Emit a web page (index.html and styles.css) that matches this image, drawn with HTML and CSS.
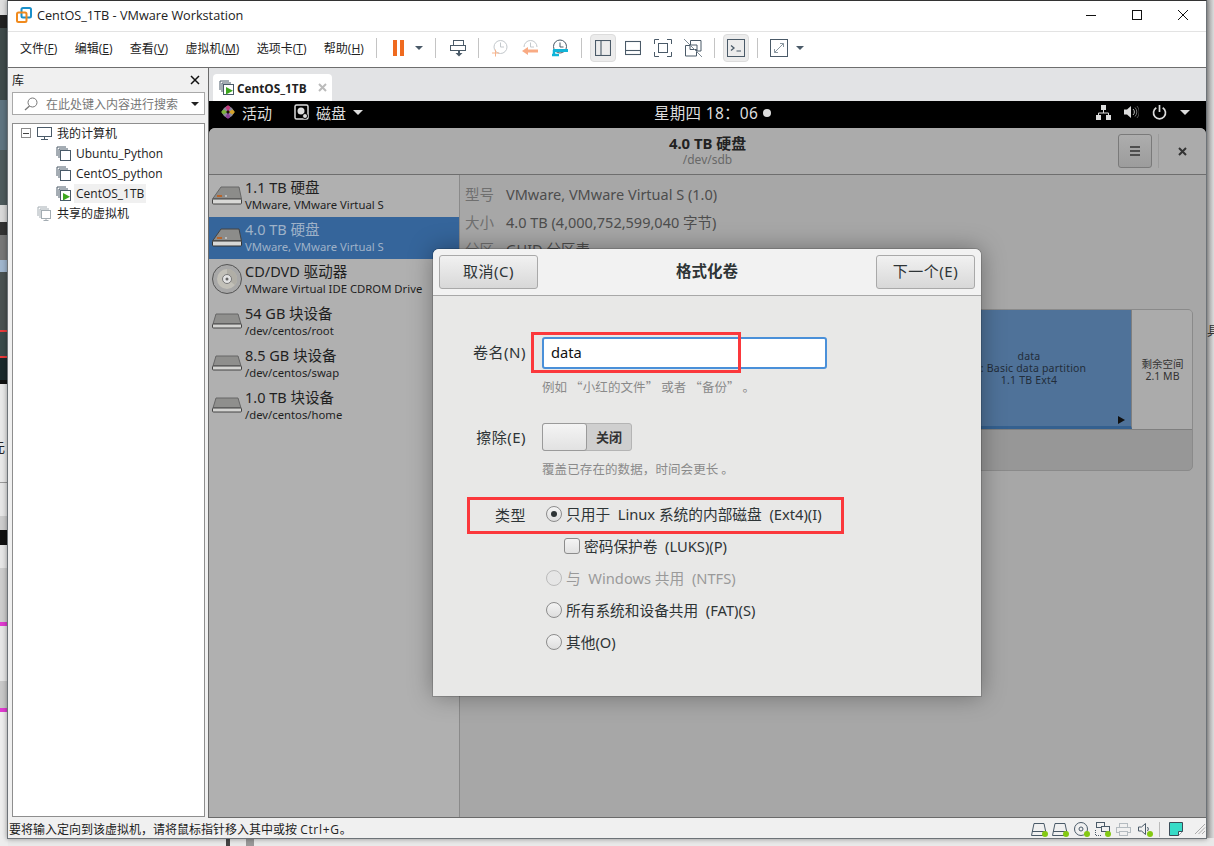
FILE: index.html
```html
<!DOCTYPE html>
<html lang="zh-CN">
<head>
<meta charset="utf-8">
<title>CentOS_1TB - VMware Workstation</title>
<link rel="stylesheet" href="styles.css">
</head>
<body>
<div class="desktop">
  <div class="bg bg-left"></div>
  <div class="bg bg-glyph">元</div>
  <div class="bg bg-glyph2">具</div>
  <div class="bg bg-bot1"></div>
  <div class="bg bg-bot2"></div>

  <div class="window">
    <header class="titlebar">
      <svg class="app-logo" viewBox="0 0 16 16" width="16" height="16">
        <rect x="5.5" y="1" width="9.5" height="9.5" rx="1.5" fill="none" stroke="#1a8fc9" stroke-width="2"/>
        <rect x="1" y="5.5" width="9.5" height="9.5" rx="1.5" fill="none" stroke="#f08a1d" stroke-width="2"/>
      </svg>
      <span class="title-text">CentOS_1TB - VMware Workstation</span>
      <div class="win-btns">
        <svg width="12" height="12" viewBox="0 0 12 12"><path d="M1 6.5h10" stroke="#111" fill="none"/></svg>
        <svg width="12" height="12" viewBox="0 0 12 12"><rect x="1.5" y="1.5" width="9" height="9" stroke="#111" fill="none"/></svg>
        <svg width="12" height="12" viewBox="0 0 12 12"><path d="M1 1l10 10M11 1L1 11" stroke="#111" fill="none"/></svg>
      </div>
    </header>

    <nav class="menubar">
      <span class="menu">文件(<u>F</u>)</span>
      <span class="menu">编辑(<u>E</u>)</span>
      <span class="menu">查看(<u>V</u>)</span>
      <span class="menu">虚拟机(<u>M</u>)</span>
      <span class="menu">选项卡(<u>T</u>)</span>
      <span class="menu">帮助(<u>H</u>)</span>
      <i class="sep sep-first"></i>
      <span class="tool pause"><b></b><b></b></span>
      <span class="caret-btn"><i class="caret"></i></span>
      <i class="sep"></i>
      <span class="tool print"><svg width="18" height="18" viewBox="0 0 18 18" fill="none" stroke="#4a5a68"><rect x="4.5" y="1.5" width="10" height="5"/><rect x="1.5" y="6.5" width="15" height="5"/><path d="M10 11.5v3" stroke-width="2"/><path d="M6.500 14h7L10 17.500z" fill="#4a5a68" stroke="none"/></svg></span>
      <i class="sep"></i>
      <span class="tool"><svg width="18" height="18" viewBox="0 0 18 18" fill="none"><circle cx="9.500" cy="8" r="6.500" stroke="#c3c8cc"/><path d="M9.500 3.500V8h3.500" stroke="#c3c8cc"/><path d="M1 14h7M4.500 10.500v7" stroke="#f7b48c"/></svg></span>
      <span class="tool"><svg width="18" height="18" viewBox="0 0 18 18" fill="none"><path d="M3 8a6.500 6.500 0 0 1 13 0" stroke="#c3c8cc"/><path d="M9.500 3.500V8H13" stroke="#c3c8cc"/><path d="M17 12H6" stroke="#f9ab84" stroke-width="3"/><path d="M7 8v8l-6-4z" fill="#f9ab84"/></svg></span>
      <span class="tool"><svg width="18" height="18" viewBox="0 0 18 18" fill="none"><circle cx="9" cy="7.500" r="6.500" stroke="#4a5a68"/><path d="M9 3.500V8h3.500" stroke="#4a5a68"/><path d="M2 11.500h15" stroke="#10b4d8" stroke-width="3"/><path d="M1 16h7" stroke="#10b4d8" stroke-width="2.500"/><path d="M3 11v5" stroke="#10b4d8" stroke-width="2.500"/></svg></span>
      <i class="sep"></i>
      <span class="tool active"><svg width="16" height="16" viewBox="0 0 16 16" fill="none" stroke="#4a5a68" stroke-width="1.100"><rect x=".5" y=".5" width="15" height="15"/><path d="M6 .5v15"/></svg></span>
      <span class="tool"><svg width="16" height="16" viewBox="0 0 16 16" fill="none" stroke="#4a5a68" stroke-width="1.100"><rect x=".5" y="1.500" width="15" height="13"/><path d="M.5 10.500h15"/></svg></span>
      <span class="tool"><svg width="18" height="18" viewBox="0 0 18 18" fill="none" stroke="#4a5a68"><path d="M.5 5V.5H5M13 .5h4.500V5M17.500 13v4.500H13M5 17.500H.5V13"/><rect x="4.500" y="4.500" width="9" height="9"/></svg></span>
      <span class="tool"><svg width="18" height="18" viewBox="0 0 18 18" fill="none" stroke="#4a5a68"><path d="M6.500 1.500h10.500v10.500h-4V6H6.500z"/><path d="M1.500 6.500h4.500v4h6.500v6.500H1.500z"/><path d="M0 0l18 18" stroke="#7e8b95"/></svg></span>
      <i class="sep"></i>
      <span class="tool active"><svg width="18" height="18" viewBox="0 0 18 18" fill="none" stroke="#4a5a68"><rect x=".5" y=".5" width="17" height="17"/><path d="M4 6.500l3 2.500-3 2.500" stroke-width="1.300"/><path d="M9.500 12h4.500"/></svg></span>
      <i class="sep"></i>
      <span class="tool"><svg width="18" height="18" viewBox="0 0 18 18" fill="none" stroke="#4a5a68"><rect x=".5" y=".5" width="17" height="17"/><path d="M4.500 13.500l9-9M10 4.500h3.500V8M4.500 10v3.500H8" stroke="#8a97a0"/></svg></span>
      <span class="caret-btn end"><i class="caret"></i></span>
    </nav>

    <main class="workspace">
      <aside class="library">
        <div class="lib-head"><span>库</span><svg width="10" height="10" viewBox="0 0 10 10"><path d="M1 1l8 8M9 1L1 9" stroke="#111" stroke-width="1.500" fill="none"/></svg></div>
        <div class="lib-search">
          <svg width="14" height="14" viewBox="0 0 14 14" fill="none" stroke="#777"><circle cx="8.500" cy="5.500" r="4.500"/><path d="M5.500 9L1 13" stroke-width="1.300"/></svg>
          <span>在此处键入内容进行搜索</span>
          <i class="caret dark"></i>
        </div>
        <div class="tree">
          <div class="tree-row top">
            <span class="minus"></span>
            <svg width="15" height="13" viewBox="0 0 15 13" fill="none" stroke="#4a5a68"><rect x=".5" y=".5" width="14" height="9"/><path d="M7.500 10v2M4 12.500h7"/></svg>
            <span class="tree-label">我的计算机</span>
          </div>
          <div class="tree-row child"><svg class="vm-i" width="15" height="15" viewBox="0 0 15 15" fill="none" stroke="#4a5a68"><path d="M1 10V1h9"/><path d="M3 12V3h9"/><rect x="4.500" y="4.500" width="10" height="10" fill="#fff"/></svg><span>Ubuntu_Python</span></div>
          <div class="tree-row child"><svg class="vm-i" width="15" height="15" viewBox="0 0 15 15" fill="none" stroke="#4a5a68"><path d="M1 10V1h9"/><path d="M3 12V3h9"/><rect x="4.500" y="4.500" width="10" height="10" fill="#fff"/></svg><span>CentOS_python</span></div>
          <div class="tree-row child"><svg class="vm-i" width="15" height="15" viewBox="0 0 15 15" fill="none" stroke="#4a5a68"><path d="M1 10V1h9"/><path d="M3 12V3h9"/><rect x="4.500" y="4.500" width="10" height="10" fill="#fff"/><path d="M7 7v7.500l7-3.700z" fill="#3da61e" stroke="none"/></svg><span class="sel">CentOS_1TB</span></div>
          <div class="tree-row top shared">
            <svg width="15" height="15" viewBox="0 0 15 15" fill="none" stroke="#a4adb3"><path d="M1 10V1h9"/><path d="M3 12V3h9"/><rect x="4.500" y="4.500" width="9" height="8" fill="#fff"/><path d="M9 12.500v2M6.500 14.500h5"/></svg>
            <span class="tree-label">共享的虚拟机</span>
          </div>
        </div>
      </aside>

      <section class="vm-pane">
        <div class="tabstrip">
          <div class="tab">
            <svg width="15" height="15" viewBox="0 0 15 15" fill="none" stroke="#4a5a68"><path d="M1 10V1h9"/><path d="M3 12V3h9"/><rect x="4.500" y="4.500" width="10" height="10" fill="#fff"/><path d="M7 7v7.500l7-3.700z" fill="#3da61e" stroke="none"/></svg>
            <span class="tab-label">CentOS_1TB</span>
            <svg class="tab-x" width="9" height="9" viewBox="0 0 9 9"><path d="M1 1l7 7M8 1L1 8" stroke="#bbb" stroke-width="2" fill="none"/></svg>
          </div>
        </div>

        <div class="guest">
          <div class="gnome-top">
            <div class="gt-left">
              <svg width="14" height="14" viewBox="0 0 14 14"><path d="M3 3L6 1v5H1zM11 3L8 1v5h5zM11 11l-3 2V8h5zM3 11l3 2V8H1z" fill="#8b8a9c"/><path d="M7 0l2.500 2.500L7 6.500 4.500 2.500z" fill="#c13a7c"/><path d="M14 7l-2.500 2.500L7.500 7l4-2.500z" fill="#d3a229"/><path d="M7 14l-2.500-2.500L7 7.500l2.500 4z" fill="#8a3f97"/><path d="M0 7l2.500-2.500 4 2.500-4 2.500z" fill="#7db23c"/></svg>
              <span class="gt-act">活动</span>
              <svg class="gt-app" width="15" height="16" viewBox="0 0 15 16" fill="none"><rect x="1" y="1" width="13" height="14" rx="1.500" stroke="#ddd" stroke-width="1.500"/><circle cx="7" cy="7" r="3.500" fill="#ddd"/><circle cx="11" cy="12" r="2.500" fill="#ddd" stroke="#000"/></svg>
              <span>磁盘</span>
              <i class="caret light"></i>
            </div>
            <div class="gt-clock">星期四 18：06<i class="dot"></i></div>
            <div class="gt-tray">
              <svg width="15" height="15" viewBox="0 0 15 15" fill="#ddd"><rect x="5" y="0" width="5" height="5"/><rect x="0" y="10" width="5" height="5"/><rect x="10" y="10" width="5" height="5"/><path d="M7.500 5v3M2.500 10V8h10v2" stroke="#ddd" fill="none"/></svg>
              <svg width="15" height="14" viewBox="0 0 15 14" fill="none"><path d="M0 4.500h3L7 1v12L3 9.500H0z" fill="#ddd"/><path d="M9 4a4 4 0 0 1 0 6" stroke="#bbb"/><path d="M11 2.500a6.500 6.500 0 0 1 0 9" stroke="#777"/><path d="M13 1a9 9 0 0 1 0 12" stroke="#555"/></svg>
              <svg width="15" height="15" viewBox="0 0 15 15" fill="none" stroke="#ddd" stroke-width="1.700"><path d="M4.300 2.800a6 6 0 1 0 6.400 0"/><path d="M7.500 0v7"/></svg>
              <i class="caret light"></i>
            </div>
          </div>

          <div class="disks">
            <div class="disks-head">
              <div class="dh-spacer"></div>
              <div class="dh-title">
                <strong>4.0 TB 硬盘</strong>
                <small>/dev/sdb</small>
              </div>
              <div class="dh-actions">
                <span class="menu-btn"><svg width="10" height="10" viewBox="0 0 10 10"><path d="M0 1h10M0 5h10M0 9h10" stroke="#333" stroke-width="1.600"/></svg></span>
                <i class="dh-sep"></i>
                <svg class="dh-close" width="9" height="9" viewBox="0 0 9 9"><path d="M1 1l7 7M8 1L1 8" stroke="#333" stroke-width="2" fill="none"/></svg>
              </div>
            </div>
            <div class="disks-body">
              <ul class="drive-list">
                <li class="drive"><svg class="hdd" width="30" height="19" viewBox="0 0 30 19"><path d="M9 1h18l2.500 12H.5z" fill="#8c8c8a" stroke="#666"/><rect x=".5" y="13" width="29" height="5" rx="1" fill="#d8d8d6" stroke="#444"/><rect x="5" y="9" width="5" height="2" fill="#b8642a"/><rect x="13" y="9" width="2" height="2" fill="#bbb"/></svg><div><b>1.1 TB 硬盘</b><small>VMware, VMware Virtual S</small></div></li>
                <li class="drive selected"><svg class="hdd" width="30" height="19" viewBox="0 0 30 19"><path d="M9 1h18l2.500 12H.5z" fill="#8c8c8a" stroke="#444"/><rect x=".5" y="13" width="29" height="5" rx="1" fill="#d8d8d6" stroke="#333"/><rect x="5" y="9" width="5" height="2" fill="#b8642a"/><rect x="13" y="9" width="2" height="2" fill="#bbb"/></svg><div><b>4.0 TB 硬盘</b><small>VMware, VMware Virtual S</small></div></li>
                <li class="drive"><svg class="hdd" width="30" height="30" viewBox="0 0 30 30"><circle cx="15" cy="15" r="14.500" fill="#a8a8a8" stroke="#555"/><circle cx="15" cy="15" r="10" fill="#c2c0b8"/><path d="M15 5a10 10 0 0 1 8 16L15 15z" fill="#b0aea6"/><circle cx="15" cy="15" r="4.500" fill="#e4e4e4" stroke="#777"/><circle cx="15" cy="15" r="1.500" fill="#666"/></svg><div><b>CD/DVD 驱动器</b><small>VMware Virtual IDE CDROM Drive</small></div></li>
                <li class="drive"><svg class="hdd" width="30" height="16" viewBox="0 0 30 16"><path d="M4 1h22l3 10H1z" fill="#8f8f8d" stroke="#666"/><rect x=".5" y="11" width="29" height="4" rx="1" fill="#d4d4d2" stroke="#444"/></svg><div><b>54 GB 块设备</b><small>/dev/centos/root</small></div></li>
                <li class="drive"><svg class="hdd" width="30" height="16" viewBox="0 0 30 16"><path d="M4 1h22l3 10H1z" fill="#8f8f8d" stroke="#666"/><rect x=".5" y="11" width="29" height="4" rx="1" fill="#d4d4d2" stroke="#444"/></svg><div><b>8.5 GB 块设备</b><small>/dev/centos/swap</small></div></li>
                <li class="drive"><svg class="hdd" width="30" height="16" viewBox="0 0 30 16"><path d="M4 1h22l3 10H1z" fill="#8f8f8d" stroke="#666"/><rect x=".5" y="11" width="29" height="4" rx="1" fill="#d4d4d2" stroke="#444"/></svg><div><b>1.0 TB 块设备</b><small>/dev/centos/home</small></div></li>
              </ul>
              <div class="detail">
                <div class="info"><span class="k">型号</span><span>VMware, VMware Virtual S (1.0)</span></div>
                <div class="info"><span class="k">大小</span><span>4.0 TB (4,000,752,599,040 字节)</span></div>
                <div class="info"><span class="k">分区</span><span>GUID 分区表</span></div>
                <div class="map">
                  <div class="map-row">
                    <div class="part-data">
                      <span>data</span>
                      <span>2 : Basic data partition</span>
                      <span>1.1 TB Ext4</span>
                      <i class="part-arrow"></i>
                    </div>
                    <div class="part-free"><span>剩余空间</span><span>2.1 MB</span></div>
                  </div>
                  <div class="map-foot"></div>
                </div>
              </div>
            </div>
          </div>

          <div class="dialog">
            <div class="dlg-head">
              <button class="btn" type="button">取消(C)</button>
              <strong>格式化卷</strong>
              <button class="btn" type="button">下一个(E)</button>
            </div>
            <div class="dlg-body">
              <div class="field name-field">
                <label>卷名(N)</label>
                <div class="ctl">
                  <div class="input">data</div>
                  <p class="hint">例如 “小红的文件” 或者 “备份” 。</p>
                </div>
              </div>
              <div class="field erase-field">
                <label>擦除(E)</label>
                <div class="ctl">
                  <div class="switch"><span class="knob"></span><span class="off">关闭</span></div>
                  <p class="hint">覆盖已存在的数据，时间会更长 。</p>
                </div>
              </div>
              <div class="field type-field">
                <label>类型</label>
                <div class="options">
                  <div class="opt"><i class="radio on"></i>只用于 &nbsp;Linux 系统的内部磁盘 &nbsp;(Ext4)(I)</div>
                  <div class="opt sub"><i class="check"></i>密码保护卷 &nbsp;(LUKS)(P)</div>
                  <div class="opt disabled"><i class="radio"></i>与 &nbsp;Windows 共用 &nbsp;(NTFS)</div>
                  <div class="opt"><i class="radio"></i>所有系统和设备共用 &nbsp;(FAT)(S)</div>
                  <div class="opt"><i class="radio"></i>其他(O)</div>
                </div>
              </div>
            </div>
          </div>
        </div>
      </section>
    </main>

    <footer class="statusbar">
      <span>要将输入定向到该虚拟机，请将鼠标指针移入其中或按 <span class="key">Ctrl+G</span>。</span>
      <div class="status-icons">
        <span class="si"><svg width="16" height="13" viewBox="0 0 16 13" fill="none" stroke="#4a5a68"><path d="M3 .5h10l2.500 12H.5z"/><path d="M1 8.500h14"/></svg><i></i></span>
        <span class="si"><svg width="16" height="13" viewBox="0 0 16 13" fill="none" stroke="#4a5a68"><path d="M3 .5h10l2.500 12H.5z"/><path d="M1 8.500h14"/></svg><i></i></span>
        <span class="si"><svg width="14" height="14" viewBox="0 0 14 14" fill="none" stroke="#4a5a68"><circle cx="7" cy="7" r="6.500"/><circle cx="7" cy="7" r="2"/></svg><i></i></span>
        <span class="si"><svg width="15" height="14" viewBox="0 0 15 14" fill="none" stroke="#4a5a68"><rect x="1.500" y=".5" width="8" height="5"/><rect x="6.500" y="4.500" width="8" height="5" fill="#f0f0f0"/><path d="M.5 8v5.500H7" stroke-dasharray="1 1"/></svg><i></i></span>
        <span class="si"><svg width="15" height="13" viewBox="0 0 15 13" fill="none" stroke="#b4bbc0"><rect x="3.500" y=".5" width="8" height="4"/><rect x=".5" y="4.500" width="14" height="5"/><rect x="3.500" y="8.500" width="8" height="4" fill="#f0f0f0"/></svg></span>
        <span class="si"><svg width="12" height="14" viewBox="0 0 12 14" fill="none" stroke="#4a5a68"><path d="M.5 5h3l4-3.500v11L3.500 9h-3z"/><path d="M9.500 5a3 3 0 0 1 0 4"/></svg><i></i></span>
        <i class="st-sep"></i>
        <svg class="note" width="14" height="14" viewBox="0 0 14 14"><path d="M.5.5h13v9l-4 4h-9z" fill="#37dbc7" stroke="#3c4b57"/><path d="M13.500 9.500h-4v4" fill="#fff" stroke="#3c4b57"/></svg>
        <svg class="grip" width="12" height="12" viewBox="0 0 12 12"><path d="M11 1L1 11M11 4.500L4.500 11M11 8l-3 3" stroke="#aaa" fill="none"/></svg>
      </div>
    </footer>
  </div>

  <div class="mark mark-name"></div>
  <div class="mark mark-type"></div>
</div>
</body>
</html>
```

FILE: styles.css
```css
* { box-sizing: border-box; }
html, body { margin: 0; padding: 0; }
body { width: 1214px; height: 846px; overflow: hidden; font-family: "Open Sans", "Noto Sans CJK SC", sans-serif; font-size: 12px; color: #1a1a1a; }
ul { list-style: none; margin: 0; padding: 0; }
p { margin: 0; }
i { font-style: normal; display: block; }

.desktop { position: relative; width: 1214px; height: 846px; background: linear-gradient(90deg, #9d9d9d 1206px, #dcdcdc 1214px); overflow: hidden; }
.bg { position: absolute; }
.bg-left { left: 0; top: 0; width: 8px; height: 846px; background: linear-gradient(180deg,
  #dedede 0 15px, #222 15px 28px, #3f4a4a 28px 100px, #5f7480 100px 150px, #4d5a5c 150px 205px,
  #d8d8d8 205px 222px, #333 222px 235px, #777 235px 260px, #9fb5cd 260px 272px, #4a5252 272px 330px,
  #ea3a3a 330px 332px, #3a4a4a 332px 356px, #ea3a3a 356px 358px, #1a2a2c 358px 380px, #111 380px 384px,
  #e8e8e8 384px 482px, #999 482px 483px, #e6e6e6 483px 516px, #ccc 516px 530px, #111 530px 545px,
  #e6e6e6 545px 568px, #cdcdcd 568px 622px, #e03bd0 622px 626px, #e6e6e6 626px 681px, #c8c8c8 681px 708px,
  #e03bd0 708px 712px, #ededed 712px); }
.bg-glyph { left: -8px; top: 437px; font-size: 13px; color: #222; }
.bg-glyph2 { left: 1207px; top: 320px; font-size: 13px; color: #333; }
.bg-bot1 { left: 8px; top: 838px; width: 1206px; height: 8px; background: #e9e9e9; }
.bg-bot2 { left: 226px; top: 838px; width: 28px; height: 8px; background: linear-gradient(90deg, #444 0 4px, #e8e8e8 4px 20px, #999 20px); }

.window { position: absolute; left: 7px; top: 0; width: 1200px; height: 839px; background: #f0f0f0; border: 1px solid #6d7378; border-top: 1px solid #333; display: flex; flex-direction: column; box-shadow: 0 0 5px rgba(0,0,0,.4); }

.titlebar { height: 30px; flex: none; background: #fff; display: flex; align-items: center; padding: 0 0 2px 8px; }
.app-logo { margin-right: 5px; }
.title-text { font-size: 12.700px; color: #222; }
.win-btns { margin-left: auto; display: flex; gap: 34px; padding-right: 17px; }

.menubar { height: 37px; flex: none; background: #fff; border-top: 1px solid #e3e3e3; border-bottom: 1px solid #6e6e6e; display: flex; align-items: center; padding: 0 0 4px 12px; }
.menu { font-size: 12px; margin-right: 17.400px; color: #222; white-space: nowrap; }
.menu u { text-underline-offset: 1px; }
.sep { width: 1px; height: 20px; background: #c4c4c4; flex: none; }
.sep-first { margin-left: -5px; margin-right: 4px; }
.tool { width: 30px; height: 28px; display: flex; align-items: center; justify-content: center; flex: none; }
.menubar .sep + .tool { margin-left: 6px; }
.menubar .tool + .sep { margin-left: 6px; }
.menubar .sep + .tool.print { margin: 0 -1px 0 7px; }
.tool.active { width: 26px; background: #ececec; border: 1px solid #dcdcdc; border-radius: 4px; }
.menubar .sep + .tool.active { margin-left: 8px; }
.menubar .tool.active + .sep { margin-left: 8px; }
.tool.active + .tool { margin-left: 2px; }
.pause { gap: 3px; width: 22px; }
.pause b { display: block; width: 4px; height: 16px; background: #ef6a1f; }
.caret-btn { width: 14px; display: flex; justify-content: center; margin: 0 9px 0 3px; flex: none; }
.caret-btn.end { margin: 0 0 0 -1px; }
.caret { width: 0; height: 0; border-left: 4px solid transparent; border-right: 4px solid transparent; border-top: 4px solid #4a5a68; }
.caret.dark { border-top-color: #222; margin-left: auto; }
.caret.light { border-left-width: 5px; border-right-width: 5px; border-top: 5px solid #ddd; }

.workspace { flex: 1; display: flex; min-height: 0; background: #f0f0f0; }
.library { width: 200px; flex: none; padding: 0 3px 4px 4px; display: flex; flex-direction: column; }
.lib-head { height: 24px; flex: none; display: flex; align-items: center; justify-content: space-between; padding-right: 5px; font-size: 12px; }
.lib-search { height: 23px; flex: none; background: #fff; border: 1px solid #a9a9a9; display: flex; align-items: center; padding: 0 5px 0 11px; color: #777; gap: 8px; }
.tree { flex: 1; margin-top: 8px; background: #fff; border: 1px solid #8e8e8e; }
.tree-row { height: 20px; display: flex; align-items: center; font-size: 12px; color: #222; white-space: nowrap; padding-bottom: 2px; }
.tree-row.top { padding-left: 8px; gap: 6px; }
.tree-row.child { padding-left: 43px; gap: 5px; }
.tree-row.shared { padding-left: 24px; }
.tree-label { margin-left: -1px; }
.minus { width: 10px; height: 10px; border: 1px solid #8a8a8a; position: relative; }
.minus::after { content: ""; position: absolute; left: 1px; right: 1px; top: 3.500px; height: 1px; background: #444; }
.sel { background: #f0f0f0; padding: 1px 2px; margin-left: -2px; }

.vm-pane { flex: 1; min-width: 0; display: flex; flex-direction: column; border-left: 1px solid #6a6a6a; border-bottom: 1px solid #6a6a6a; margin-bottom: 3px; position: relative; }
.tabstrip { height: 33px; flex: none; background: #e2e3e5; padding: 6px 0 0 4px; display: flex; }
.tab { width: 119px; height: 27px; background: #fff; border-radius: 4px 4px 0 0; display: flex; align-items: center; padding-left: 6px; gap: 3px; }
.tab-label { font-weight: 700; font-size: 11.800px; color: #222; }
.tab-x { margin-left: 8px; }

.guest { flex: 1; min-height: 0; display: flex; flex-direction: column; background: #000; position: relative; }
.gnome-top { height: 27px; flex: none; background: #000; color: #ddd; position: relative; display: flex; align-items: center; font-family: "Noto Sans", "Noto Sans CJK SC", sans-serif; font-size: 15px; padding: 0 16px 5px 12px; }
.gt-left { display: flex; align-items: center; gap: 7px; }
.gt-app { margin-left: 15px; }
.gt-clock { position: absolute; left: 445px; top: 0; height: 23px; display: flex; align-items: center; gap: 2px; font-size: 15.500px; letter-spacing: .3px; }
.dot { width: 8px; height: 8px; border-radius: 50%; background: #ddd; margin-left: 3px; }
.gt-tray { margin-left: auto; display: flex; align-items: center; gap: 13px; }

.disks { flex: 1; min-height: 0; display: flex; flex-direction: column; background: #a7a7a7; border-radius: 6px 6px 0 0; font-family: "Noto Sans", "Noto Sans CJK SC", sans-serif; }
.disks-head { height: 47px; flex: none; background: #ababab; border-radius: 6px 6px 0 0; border-bottom: 1px solid #6e6e6e; display: flex; align-items: center; }
.dh-spacer { flex: 1 1 0; }
.dh-title { display: flex; flex-direction: column; align-items: center; margin-top: -2px; white-space: nowrap; }
.dh-title strong { font-size: 14.900px; line-height: 20px; color: #222; }
.dh-title small { font-size: 12px; line-height: 14px; color: #686868; }
.dh-actions { flex: 1 1 0; display: flex; justify-content: flex-end; align-items: center; }
.dh-close { margin-right: 19px; }
.menu-btn { width: 34px; height: 34px; border: 1px solid #7a7a7a; border-radius: 3px; background: linear-gradient(#adadad, #9c9c9c); display: flex; align-items: center; justify-content: center; }
.dh-sep { width: 1px; height: 34px; background: #9c9c9c; margin: 0 19px 0 6px; }

.disks-body { flex: 1; min-height: 0; display: flex; }
.drive-list { width: 251px; flex: none; background: #b0b0b0; border-right: 1px solid #8a8a8a; }
.drive { height: 42px; display: flex; align-items: center; padding: 0 0 2px 2px; color: #1f1f1f; }
.drive .hdd { flex: none; margin: 0 3px 0 1px; }
.drive > div { display: flex; flex-direction: column; }
.drive b { font-weight: 400; font-size: 14.500px; line-height: 20px; }
.drive small { font-size: 11.300px; line-height: 16px; }
.drive.selected { background: #35659b; color: #9fb2c8; }

.detail { flex: 1; min-width: 0; background: #a7a7a7; padding: 5px 13px 0 5px; font-size: 14.500px; color: #4d4d4d; }
.info { height: 27.600px; display: flex; align-items: center; gap: 12px; }
.k { color: #6f6f6f; }
.map { margin-top: 46.200px; height: 162px; border: 1px solid #8a8a8a; border-radius: 5px; overflow: hidden; background: #979797; display: flex; flex-direction: column; }
.map-row { height: 120px; flex: none; display: flex; border-bottom: 1px solid #7f7f7f; }
.part-data { flex: 1; background: #4f7299; border-bottom: 3px solid #34608f; border-right: 1px solid #7f7f7f; display: flex; flex-direction: column; align-items: center; justify-content: center; font-size: 10.500px; line-height: 12px; color: #222d3a; position: relative; letter-spacing: .2px; padding-left: 461px; }
.part-arrow { position: absolute; right: 6px; bottom: 2px; width: 0; height: 0; border-top: 4px solid transparent; border-bottom: 4px solid transparent; border-left: 7px solid #111; }
.part-free { width: 60px; flex: none; background: #ababab; display: flex; flex-direction: column; align-items: center; justify-content: center; font-size: 10.500px; line-height: 12px; color: #333; padding: 2px 0 0 1px; }
.map-foot { flex: 1; }

.dialog { position: absolute; left: 224px; top: 148px; width: 548px; height: 447px; background: #e8e8e7; border-radius: 6px 6px 0 0; box-shadow: 0 0 24px rgba(0,0,0,.35), 0 0 0 1px rgba(0,0,0,.15); display: flex; flex-direction: column; font-family: "Noto Sans", "Noto Sans CJK SC", sans-serif; font-size: 14.700px; color: #2e3436; }
.dlg-head { height: 47px; flex: none; background: #f2f2f2; border-radius: 6px 6px 0 0; border-bottom: 1px solid #a8a8a8; display: flex; align-items: center; justify-content: space-between; padding: 0 6px; }
.dlg-head strong { font-size: 15.500px; color: #2e3436; padding-bottom: 3px; }
.btn { width: 99px; height: 34px; border: 1px solid #a9a9a9; border-radius: 3px; background: linear-gradient(#f1f1f1, #d8d8d8); font-family: inherit; font-size: 15px; letter-spacing: .5px; line-height: 28px; color: #2e3436; padding: 0 0 3px; }

.dlg-body { flex: 1; display: flex; flex-direction: column; padding-top: 41px; }
.field { display: flex; }
.field label { width: 93px; flex: none; text-align: right; margin-right: 16px; color: #2e3436; line-height: 30px; font-size: 15px; letter-spacing: .5px; }
.ctl { display: flex; flex-direction: column; align-items: flex-start; }
.input { width: 285px; height: 32px; background: #fff; border: 2px solid #4a90d9; border-radius: 3px; padding-left: 7px; line-height: 27px; color: #111; }
.hint { font-family: "Noto Sans CJK SC", sans-serif; font-size: 12.500px; letter-spacing: .1px; color: #8a8a8a; margin-top: 9px; line-height: 17px; white-space: nowrap; }
.erase-field { margin-top: 28px; }
.erase-field label { line-height: 28px; }
.switch { width: 90px; height: 28px; border: 1px solid #b4b4b4; border-radius: 3px; background: #cfcfcf; display: flex; font-size: 13px; font-weight: 700; color: #333; }
.knob { width: 45px; background: linear-gradient(#f4f4f4, #e2e2e2); border: 1px solid #9a9a9a; border-radius: 3px; margin: -1px 0 -1px -1px; }
.off { flex: 1; text-align: center; line-height: 26px; }
.type-field { margin-top: 22px; }
.type-field label { line-height: 32px; }
.options { display: flex; flex-direction: column; margin-left: 4px; }
.opt { height: 32px; display: flex; align-items: center; white-space: pre; color: #2e3436; padding-bottom: 3px; }
.opt.sub { padding-left: 18px; }
.opt.disabled { color: #9a9a9a; }
.radio { width: 16px; height: 16px; border-radius: 50%; border: 1px solid #8c8c8c; background: linear-gradient(#f4f4f4, #dedede); margin-right: 4px; flex: none; position: relative; }
.radio.on::after { content: ""; position: absolute; left: 4px; top: 4px; width: 6px; height: 6px; border-radius: 50%; background: #2e3436; }
.opt.disabled .radio { border-color: #bbb; background: #e6e6e6; }
.check { width: 16px; height: 16px; border-radius: 3px; border: 1px solid #8c8c8c; background: linear-gradient(#f4f4f4, #e2e2e2); margin-right: 4px; flex: none; }

.statusbar { height: 18px; flex: none; background: #f0f0f0; display: flex; align-items: center; font-size: 12px; color: #222; padding-left: 1px; margin-top: -1px; }
.key { letter-spacing: .7px; }
.status-icons { margin-left: auto; display: flex; align-items: center; gap: 5px; }
.si { position: relative; display: flex; width: 16px; justify-content: center; }
.si i { position: absolute; right: -1px; bottom: -1px; width: 6px; height: 6px; border-radius: 50%; background: #84c913; }
.st-sep { width: 1px; height: 15px; background: #bbb; margin: 0 4px 0 2px; }
.note { margin-right: 6px; }

.mark { position: absolute; border: 3px solid #fb383c; }
.mark-name { left: 531px; top: 332px; width: 210px; height: 41px; }
.mark-type { left: 467px; top: 497px; width: 377px; height: 37px; }
```
